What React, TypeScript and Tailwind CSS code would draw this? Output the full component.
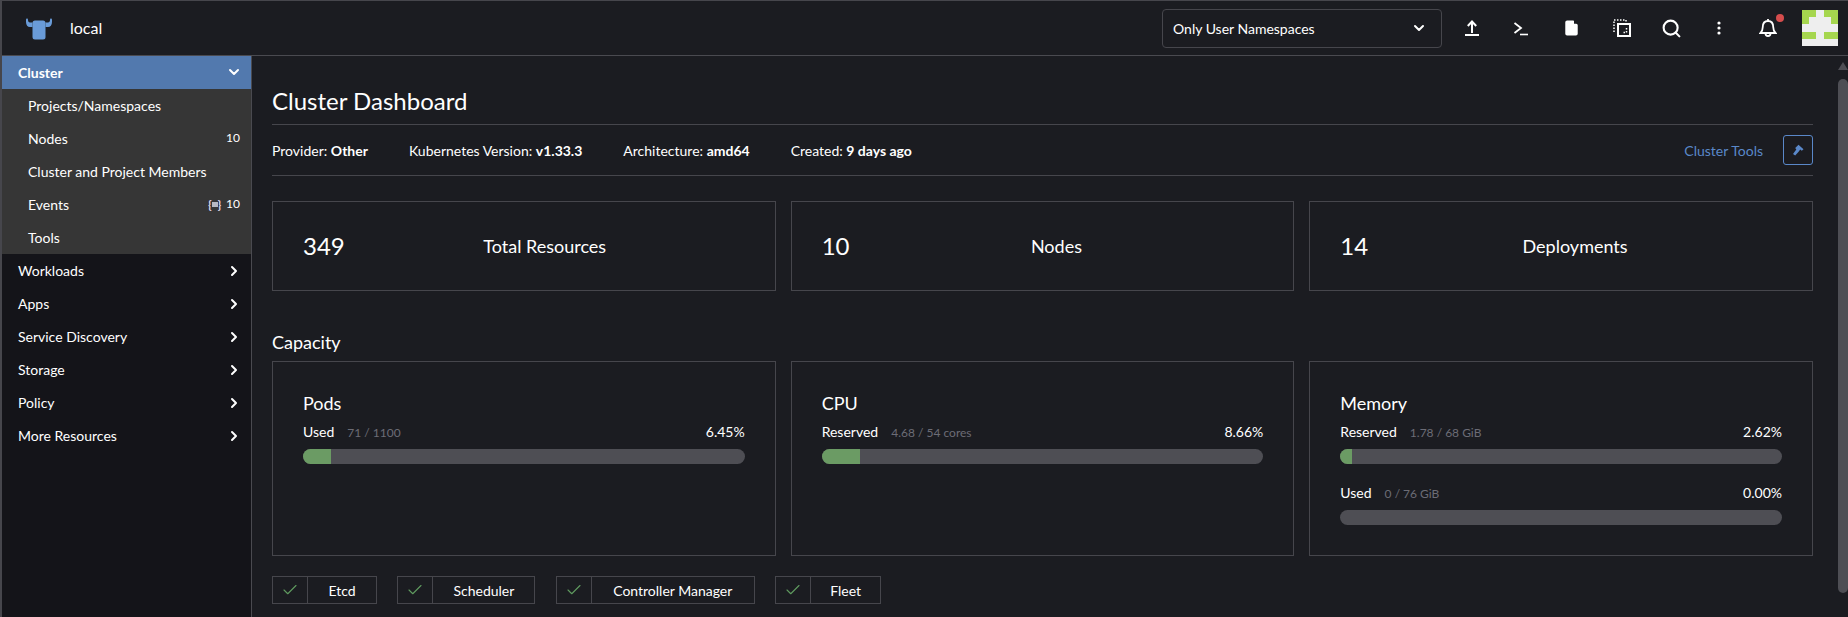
import { ChevronDown, ChevronRight, Search, Check } from 'lucide-react'

const lato = { fontFamily: 'Lato, sans-serif' }

const clusterLinks = [
  { label: 'Projects/Namespaces' },
  { label: 'Nodes', count: '10' },
  { label: 'Cluster and Project Members' },
  { label: 'Events', count: '10', badge: true },
  { label: 'Tools' },
]

const navGroups = ['Workloads', 'Apps', 'Service Discovery', 'Storage', 'Policy', 'More Resources']

function Logo() {
  return (
    <svg width="26" height="22" viewBox="0 0 26 22" className="text-[#699bd8]" fill="currentColor">
      <path d="M1 0.5c.8 0 1 .6 1 1.5 0 1.6.7 2.5 2 2.5h2.5V9H4C1.6 9 0 7 0 4V2C0 1 .3.5 1 .5Z" />
      <path d="M25 0.5c-.8 0-1 .6-1 1.5 0 1.6-.7 2.5-2 2.5h-2.5V9H22c2.4 0 4-2 4-5V2c0-1-.3-1.500-1-1.500Z" />
      <rect x="6.500" y="2.500" width="13" height="19" rx="2.500" />
    </svg>
  )
}

function HeaderIcons() {
  return (
    <div className="flex items-center">
      <svg width="16" height="18" viewBox="0 0 16 18" className="ml-[22px]" fill="none" stroke="white" strokeWidth="2">
        <path d="M8 14V3M3.800 7 8 2.500 12.200 7M1 16h14" />
      </svg>
      <svg width="16" height="16" viewBox="0 0 16 16" className="ml-[33px]" fill="none" stroke="white">
        <path d="m1.500 3 6.500 5-6.500 5" strokeWidth="1.800" />
        <path d="M7 14.500h8" strokeWidth="1.600" />
      </svg>
      <svg width="13" height="16" viewBox="0 0 14 18" className="ml-[36px]" fill="white">
        <path d="M2 .500h6.500c.4 0 .7.200 1 .400l4 4c.3.300.500.700.500 1.100V15.500a2 2 0 0 1-2 2H2a2 2 0 0 1-2-2v-13a2 2 0 0 1 2-2Z" />
        <path d="M9.800 0 14 4.300H9.800Z" fill="#1b1c21" />
      </svg>
      <svg width="18" height="18" viewBox="0 0 18 18" className="ml-[35px]" fill="none" stroke="white">
        <path d="M1 13V1h12v3" strokeWidth="1.500" strokeDasharray="1.500 1.500" />
        <path d="M5 5h12v12H5Z" strokeWidth="2" />
        <path d="M13.500 9v4.500H9" strokeWidth="1.500" strokeDasharray="1.500 1.500" />
      </svg>
      <Search size={21} color="white" strokeWidth={2.400} className="ml-[30px]" />
      <svg width="4" height="14" viewBox="0 0 4 14" className="ml-[35px]" fill="white">
        <circle cx="2" cy="2" r="1.600" />
        <circle cx="2" cy="7" r="1.600" />
        <circle cx="2" cy="12" r="1.600" />
      </svg>
      <div className="relative ml-[38px] h-[20px] w-[18px]">
        <svg width="18" height="20" viewBox="0 0 18 20" fill="none" stroke="white" strokeWidth="1.800">
          <path d="M1.500 15c1.300-1.300 2.200-2.500 2.200-5.500C3.700 5.500 5.800 3 9 3s5.300 2.500 5.300 6.500c0 3 .9 4.200 2.200 5.500ZM9 1v2M6.500 15.500a2.500 2.500 0 0 0 5 0" />
        </svg>
        <span className="absolute -top-[4px] left-[17px] h-[8px] w-[8px] rounded-full bg-[#d64d4d]" />
      </div>
      <svg width="36" height="36" viewBox="0 0 5 5" className="ml-[25px]" shapeRendering="crispEdges">
        <rect width="5" height="5" fill="#eeeeee" />
        <path d="M0 0h2v1H0ZM3 0h2v1H3ZM0 1h1v1H0ZM4 1h1v1H4ZM0 3h2v1H0ZM3 3h2v1H3Z" fill="#a6d64e" />
      </svg>
    </div>
  )
}

function Sidebar() {
  return (
    <aside className="w-[250px] shrink-0 border-r border-[#4a4a50] bg-[#141419] text-[14px] text-white">
      <div className="flex h-[33px] items-center justify-between bg-[#5279ae] pb-[1px] pl-[16px] pr-[9px] font-bold">
        <span>Cluster</span>
        <ChevronDown size={16} strokeWidth={3} />
      </div>
      <div className="bg-[#363636]">
        {clusterLinks.map((link) => (
          <div key={link.label} className="flex h-[33px] items-center justify-between pb-[1px] pl-[26px] pr-[11px]">
            <span>{link.label}</span>
            {link.count && (
              <span className="flex items-center gap-[5px] text-[12px]">
                {link.badge && (
                  <span className="flex items-center text-[11px] font-bold leading-none text-[#e4dcf2]">
                    {'{'}
                    <span className="h-[5px] w-[6px] bg-[#b9b9c2]" />
                    {'}'}
                  </span>
                )}
                {link.count}
              </span>
            )}
          </div>
        ))}
      </div>
      {navGroups.map((group) => (
        <div key={group} className="flex h-[33px] items-center justify-between pl-[16px] pr-[9px]">
          <span>{group}</span>
          <ChevronRight size={16} strokeWidth={3} />
        </div>
      ))}
    </aside>
  )
}

function Stat({ count, label }: { count: string; label: string }) {
  return (
    <div className="flex h-[90px] items-center border border-[#46464c] px-[30px]">
      <span className="text-[24px]">{count}</span>
      <span className="flex-1 text-center text-[18px]">{label}</span>
    </div>
  )
}

function Meter({ label, detail, pct, value }: { label: string; detail: string; pct: string; value: number }) {
  return (
    <div className="mb-[18px]">
      <div className="flex h-[20px] items-center justify-between text-[14px]">
        <span>
          {label}
          <span className="ml-[13px] text-[12px] text-[#6c6c76]">{detail}</span>
        </span>
        <span>{pct}</span>
      </div>
      <div className="mt-[8px] h-[15px] overflow-hidden rounded-[8px] bg-[#4e4e54]">
        <div className="h-full bg-[#6b9b64]" style={{ width: `${value}%` }} />
      </div>
    </div>
  )
}

function Gauge({ title, children }: { title: string; children: React.ReactNode }) {
  return (
    <div className="h-[195px] border border-[#46464c] px-[30px] pt-[30px]">
      <h3 className="mb-[7px] h-[22px] text-[18px] leading-[22px]">{title}</h3>
      {children}
    </div>
  )
}

function Status({ label, width }: { label: string; width: string }) {
  return (
    <div className={`flex h-[28px] items-stretch border border-[#46464c] text-[14px] ${width}`}>
      <div className="flex w-[35px] shrink-0 items-center justify-center border-r border-[#46464c]">
        <Check size={18} color="#5f9a5f" strokeWidth={1.500} />
      </div>
      <div className="flex flex-1 items-center justify-center">{label}</div>
    </div>
  )
}

export default function App() {
  return (
    <div style={lato} className="flex h-[617px] w-[1848px] flex-col overflow-hidden border-l-2 border-t border-[#46464c] bg-[#1b1c21] text-white">
      <header className="flex h-[55px] shrink-0 items-center border-b border-[#4a4a50] pr-[10px]">
        <div className="ml-[24px] mt-[2px]"><Logo /></div>
        <span className="ml-[18px] text-[16px]">local</span>
        <div className="ml-auto flex h-[39px] w-[280px] items-center justify-between rounded-[4px] border border-[#46464c] pl-[10px] pr-[14px] text-[14px]">
          <span>Only User Namespaces</span>
          <ChevronDown size={16} strokeWidth={3} />
        </div>
        <HeaderIcons />
      </header>
      <div className="flex min-h-0 flex-1">
        <Sidebar />
        <main className="min-w-0 flex-1 pl-[20px] pr-[25px]">
          <h1 className="flex h-[69px] items-end border-b border-[#46464c] pb-[8px] text-[24px] leading-[30px]">Cluster Dashboard</h1>
          <div className="flex h-[51px] items-center border-b border-[#46464c] text-[14px]">
            <span>Provider: <b>Other</b></span>
            <span className="ml-[41px]">Kubernetes Version: <b>v1.33.3</b></span>
            <span className="ml-[41px]">Architecture: <b>amd64</b></span>
            <span className="ml-[41px]">Created: <b>9 days ago</b></span>
            <span className="ml-auto text-[#5a88c9]">Cluster Tools</span>
            <span className="ml-[20px] flex h-[30px] w-[30px] items-center justify-center rounded-[3px] border border-[#5a88c9]">
              <svg width="12" height="12" viewBox="0 0 12 12" fill="#5a88c9">
                <path d="M6.500.800 11.500 5.200 9.800 6.800 8.200 5.600 6.800 7.400 3.200 11.400 1 10l3.300-4.600L3.200 4Z" />
              </svg>
            </span>
          </div>
          <div className="mt-[25px] grid grid-cols-3 gap-[15px]">
            <Stat count="349" label="Total Resources" />
            <Stat count="10" label="Nodes" />
            <Stat count="14" label="Deployments" />
          </div>
          <h2 className="mb-[8px] mt-[40px] h-[22px] text-[18px] leading-[22px]">Capacity</h2>
          <div className="grid grid-cols-3 gap-[15px]">
            <Gauge title="Pods">
              <Meter label="Used" detail="71 / 1100" pct="6.45%" value={6.45} />
            </Gauge>
            <Gauge title="CPU">
              <Meter label="Reserved" detail="4.68 / 54 cores" pct="8.66%" value={8.66} />
            </Gauge>
            <Gauge title="Memory">
              <Meter label="Reserved" detail="1.78 / 68 GiB" pct="2.62%" value={2.62} />
              <Meter label="Used" detail="0 / 76 GiB" pct="0.00%" value={0} />
            </Gauge>
          </div>
          <div className="mt-[20px] flex gap-[20.400px]">
            <Status label="Etcd" width="w-[105px]" />
            <Status label="Scheduler" width="w-[138px]" />
            <Status label="Controller Manager" width="w-[199px]" />
            <Status label="Fleet" width="w-[106px]" />
          </div>
        </main>
        <div className="flex w-[10px] shrink-0 flex-col items-center">
          <span className="mt-[6px] h-0 w-0 border-x-[5px] border-b-[8px] border-x-transparent border-b-[#4e4e54]" />
          <span className="mt-[9px] h-[514px] w-[10px] rounded-[5px] bg-[#4e4e54]" />
        </div>
      </div>
    </div>
  )
}
